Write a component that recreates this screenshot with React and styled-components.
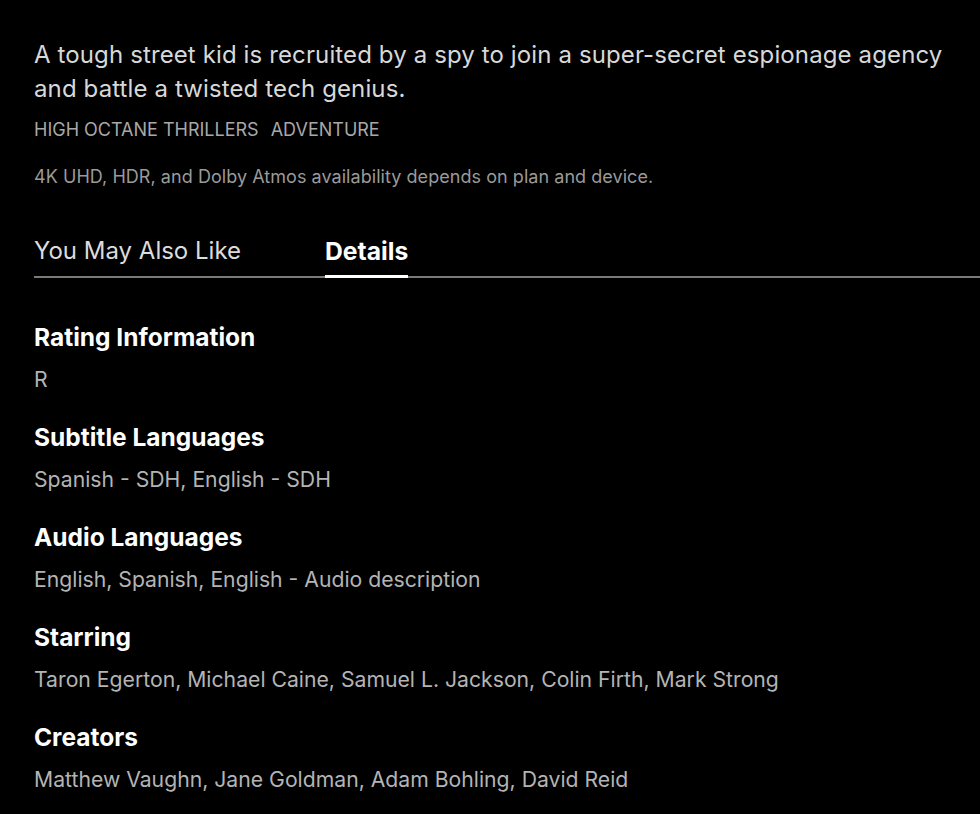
import React from "react";
import styled, { createGlobalStyle } from "styled-components";

const Global = createGlobalStyle`
  html, body { margin: 0; padding: 0; background: #000; }
  body { font-family: Inter, "Noto Sans", sans-serif; -webkit-font-smoothing: antialiased; }
  #root { min-height: 814px; background: #000; }
`;

const Page = styled.main`
  display: flex;
  flex-direction: column;
  padding: 38px 0 0 34px;
  color: #fff;
`;

const Description = styled.p`
  margin: 0;
  padding-right: 30px;
  font-size: 24px;
  letter-spacing: 0.12px;
  line-height: 34px;
  color: #d8d8d8;
`;

const Genres = styled.div`
  display: flex;
  gap: 12px;
  margin-top: 11px;
  font-size: 18px;
  line-height: 26px;
  color: #a8a8a8;
  text-transform: uppercase;
`;

const Disclaimer = styled.p`
  margin: 21px 0 0;
  font-size: 18px;
  letter-spacing: 0.05px;
  line-height: 26px;
  color: #9a9a9a;
`;

const TabBar = styled.nav`
  display: flex;
  gap: 84px;
  margin-top: 46px;
  border-bottom: 2px solid #7a7a7a;
`;

const Tab = styled.button`
  appearance: none;
  background: none;
  border: 0;
  padding: 0 0 9px;
  margin-bottom: -2px;
  font-family: inherit;
  font-size: ${(p) => (p.$active ? "24.7px" : "24px")};
  line-height: 30px;
  font-weight: ${(p) => (p.$active ? 700 : 400)};
  color: ${(p) => (p.$active ? "#fff" : "#dcdcdc")};
  border-bottom: 3px solid ${(p) => (p.$active ? "#fff" : "transparent")};
`;

const DetailList = styled.dl`
  display: flex;
  flex-direction: column;
  gap: 28px;
  margin: 44px 0 0;
`;

const Item = styled.div`
  display: flex;
  flex-direction: column;
  gap: 12px;
`;

const Term = styled.dt`
  font-size: 24.5px;
  line-height: 30px;
  font-weight: 700;
  color: #fff;
`;

const Value = styled.dd`
  margin: 0;
  font-size: 21.2px;
  line-height: 30px;
  color: #b4b4b4;
`;

const details = [
  ["Rating Information", "R"],
  ["Subtitle Languages", "Spanish - SDH, English - SDH"],
  ["Audio Languages", "English, Spanish, English - Audio description"],
  ["Starring", "Taron Egerton, Michael Caine, Samuel L. Jackson, Colin Firth, Mark Strong"],
  ["Creators", "Matthew Vaughn, Jane Goldman, Adam Bohling, David Reid"],
];

export default function App() {
  return (
    <>
      <Global />
      <Page>
        <Description>
          A tough street kid is recruited by a spy to join a super-secret espionage agency and battle a twisted tech genius.
        </Description>
        <Genres>
          <span>High Octane Thrillers</span>
          <span>Adventure</span>
        </Genres>
        <Disclaimer>4K UHD, HDR, and Dolby Atmos availability depends on plan and device.</Disclaimer>
        <TabBar>
          <Tab>You May Also Like</Tab>
          <Tab $active>Details</Tab>
        </TabBar>
        <DetailList>
          {details.map(([t, v]) => (
            <Item key={t}>
              <Term>{t}</Term>
              <Value>{v}</Value>
            </Item>
          ))}
        </DetailList>
      </Page>
    </>
  );
}
